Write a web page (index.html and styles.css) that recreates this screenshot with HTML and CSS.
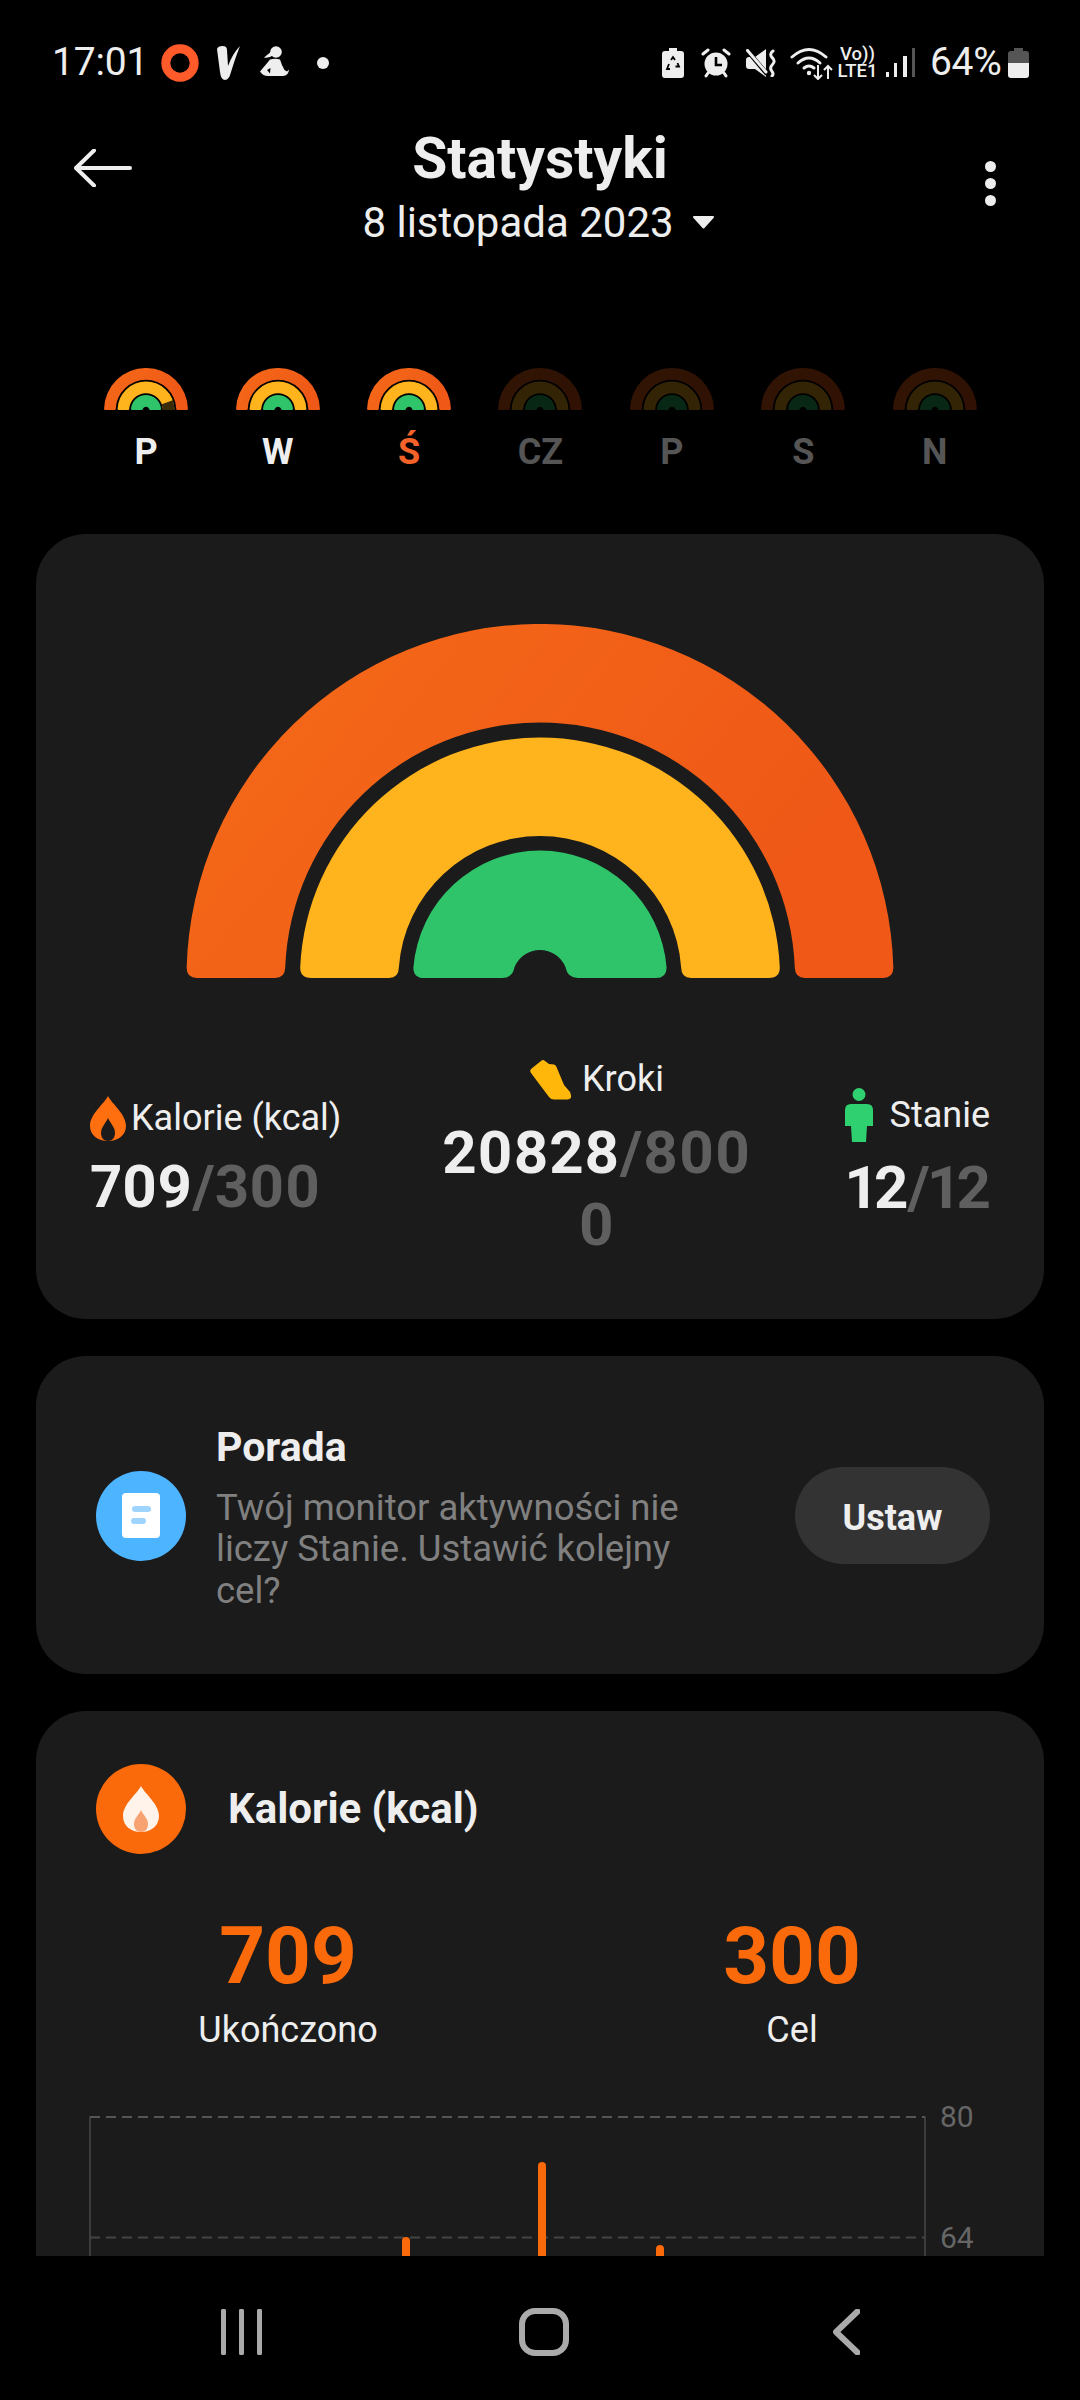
FILE: index.html
```html
<!DOCTYPE html>
<html lang="pl">
<head>
<meta charset="utf-8">
<title>Statystyki</title>
<link rel="stylesheet" href="styles.css">
</head>
<body>
<div class="screen">
  <header class="status">
    <span class="time">17:01</span>
    <svg class="si si-ring" viewBox="0 0 38 38"><circle cx="19" cy="19" r="14.2" fill="none" stroke="#ff5a2a" stroke-width="9"/></svg>
    <svg class="si si-v" viewBox="0 0 26 36"><path fill="#eee" d="M1 4Q2 1 6.500 1Q11 1 11 5L12 21Q17 8 24 1Q20 11 15 27Q13 35 9 35Q5 35 4 27Z"/></svg>
    <svg class="si si-pose" viewBox="0 0 32 34"><circle cx="17" cy="6" r="5.800" fill="#eee"/><path fill="#eee" d="M13 5L5 11.500Q10 12.500 14.500 9Z"/><path fill="#eee" fill-rule="evenodd" d="M11 13.500Q16 12 21 13.500Q23 20 25.500 24L28 25.500L30 23.500Q29.500 30 24 30L9 30Q4 30 1 25.500L9 16ZM8 24L11 27.500L11.500 22Z"/></svg>
    <span class="dot"></span>
    <span class="spring"></span>
    <svg class="si si-bat" viewBox="0 0 22 30"><path fill="#eee" d="M7 0H15V3H19Q22 3 22 6V27Q22 30 19 30H3Q0 30 0 27V6Q0 3 3 3H7Z"/><path fill="none" stroke="#000" stroke-width="1.800" d="M9 12L11 9L13 12M15.500 15L17 18.500H13.500M8 21H5L7 16"/></svg>
    <svg class="si si-alarm" viewBox="0 0 30 30"><circle cx="15" cy="16" r="11.500" fill="#eee"/><path fill="none" stroke="#eee" stroke-width="3" stroke-linecap="round" d="M2 6L7 2M28 6L23 2M5 28L7 25M25 28L23 25"/><path fill="none" stroke="#000" stroke-width="2.600" d="M15 9V17H21"/></svg>
    <svg class="si si-mute" viewBox="0 0 30 28"><path fill="#eee" d="M3 8H9L20 0V28L9 20H3Q0 20 0 17V11Q0 8 3 8Z"/><path stroke="#000" stroke-width="4.500" d="M0 0L21 25"/><path stroke="#eee" stroke-width="3" stroke-linecap="round" d="M1.500 1.500L20 23"/><path fill="none" stroke="#eee" stroke-width="3" stroke-linecap="round" d="M27 2Q23 5 26 8.500Q30 12 26.500 15.500Q23 19 26 22.500Q28 25 26 27"/></svg>
    <svg class="si si-wifi" viewBox="0 0 44 34"><g fill="none" stroke="#eee" stroke-width="3" stroke-linecap="round"><path d="M2 11Q19 -4 36 11"/><path d="M8 17Q19 7 30 17"/><path d="M14 22Q19 18 24 22"/></g><circle cx="19" cy="27" r="2.200" fill="#eee"/><path fill="none" stroke="#eee" stroke-width="2" d="M28 19V33M24 29L28 33L32 29M38 33V20M34 24L38 20L42 24"/></svg>
    <span class="net"><span class="net-vo">Vo))</span><span class="net-lte">LTE1</span></span>
    <span class="signal"><i class="sb sb1"></i><i class="sb sb2"></i><i class="sb sb3"></i><i class="sb sb4"></i></span>
    <span class="pct">64%</span>
    <svg class="si si-batt" viewBox="0 0 21 30"><path fill="#555" d="M6 0H15V3H18Q21 3 21 6V15H0V6Q0 3 3 3H6Z"/><path fill="#eee" d="M0 15H21V27Q21 30 18 30H3Q0 30 0 27Z"/></svg>
  </header>

  <div class="appbar">
    <svg class="back" viewBox="0 0 58 38"><path fill="none" stroke="#eee" stroke-width="4" stroke-linecap="round" stroke-linejoin="round" d="M20 1.500L2 19L20 36.500M2 19H56"/></svg>
    <div class="heading">
      <h1 class="title">Statystyki</h1>
      <div class="date"><span>8 listopada 2023</span><svg class="caret" viewBox="0 0 23 14"><path fill="#eee" stroke="#eee" stroke-width="2" stroke-linejoin="round" d="M2 2H21L11.500 12.500Z"/></svg></div>
    </div>
    <div class="more"><i></i><i></i><i></i></div>
  </div>

  <main class="scroll">
    <svg class="defs" width="0" height="0" aria-hidden="true">
      <defs>
        <linearGradient id="og" x1="0" y1="0" x2="1" y2="0.400"><stop offset="0" stop-color="#f56a18"/><stop offset="1" stop-color="#ef5817"/></linearGradient>
        <symbol id="rainbow" viewBox="0 0 708 354">
          <path fill="url(#og)" d="M.64 343.500A353.500 353.500 0 0 1 707.360 343.500Q707.500 354 697 354H619Q609 354 608.800 343.500A255 255 0 0 0 99.200 343.500Q99 354 89 354H11Q.5 354 .64 343.500Z"/>
          <path fill="#ffb31c" d="M114.210 343.500A240 240 0 0 1 593.790 343.500Q593.800 354 583 354H505Q495.300 354 495.150 343.500A141.500 141.500 0 0 0 212.850 343.500Q212.700 354 203 354H125Q114.200 354 114.210 343.500Z"/>
          <path fill="#2fc36a" d="M227.400 343.500A127 127 0 0 1 480.600 343.500Q480.700 354 470 354H392Q381.500 354 379.600 343.500A27.500 27.500 0 0 0 328.400 343.500Q326.500 354 316 354H238Q227.300 354 227.400 343.500Z"/>
        </symbol>
      </defs>
    </svg>

    <section class="week">
      <div class="day"><svg class="mini" viewBox="0 0 708 354"><use href="#rainbow"/><path fill="#3a2c08" d="M579.500 271.500A240 240 0 0 1 594 354H495A141.500 141.500 0 0 0 487 305Z"/></svg><span class="dl">P</span></div>
      <div class="day"><svg class="mini"><use href="#rainbow"/></svg><span class="dl">W</span></div>
      <div class="day"><svg class="mini"><use href="#rainbow"/></svg><span class="dl dl-now">Ś</span></div>
      <div class="day day-off"><svg class="mini"><use href="#rainbow"/></svg><span class="dl">CZ</span></div>
      <div class="day day-off"><svg class="mini"><use href="#rainbow"/></svg><span class="dl">P</span></div>
      <div class="day day-off"><svg class="mini"><use href="#rainbow"/></svg><span class="dl">S</span></div>
      <div class="day day-off"><svg class="mini"><use href="#rainbow"/></svg><span class="dl">N</span></div>
    </section>

    <section class="card card-ring">
      <svg class="big"><use href="#rainbow"/></svg>
      <div class="stats">
        <div class="stat stat-cal">
          <div class="stat-label">
            <svg class="ic-flame" viewBox="0 0 36 45"><path fill="#ff6f10" d="M18 0C22 8 36 18 36 30C36 39 28 45 18 45C8 45 0 39 0 30C0 18 14 8 18 0Z"/><path fill="#1b1b1b" d="M18 22C20 27 25 31 25 37C25 42 22 45 18 45C14 45 11 42 11 37C11 31 16 27 18 22Z"/></svg>
            <span>Kalorie (kcal)</span>
          </div>
          <div class="stat-num"><b>709</b><span class="of">/300</span></div>
        </div>
        <div class="stat stat-steps">
          <div class="stat-label">
            <svg class="ic-shoe" viewBox="6 5 43 42"><path fill="#ffb80a" d="M8 16L18 8Q20 6 22 8L26 11L31 11.500Q33 12 33.500 14L41 32L47 39Q50 46 45 46.500L31 46.500Q28 46.500 26 44L8 20Q6.500 18 8 16Z"/></svg>
            <span>Kroki</span>
          </div>
          <div class="stat-num stat-num-wrap"><b>20828</b><span class="of">/800</span><span class="of of-rest">0</span></div>
        </div>
        <div class="stat stat-stand">
          <div class="stat-label">
            <svg class="ic-person" viewBox="0 0 28 54"><circle cx="14" cy="6.500" r="6.500" fill="#2fd06f"/><path fill="#2fd06f" d="M6 16H22Q28 16 28 22V38H22L21 54H7L6 38H0V22Q0 16 6 16Z"/></svg>
            <span>Stanie</span>
          </div>
          <div class="stat-num"><b>12</b><span class="of">/12</span></div>
        </div>
      </div>
    </section>

    <section class="card card-tip">
      <div class="round round-blue">
        <svg class="ic-note" viewBox="0 0 38 45"><rect width="38" height="45" rx="4" fill="#fff"/><rect x="10" y="13" width="19" height="6" rx="3" fill="#9fd4ff"/><rect x="9" y="25" width="15" height="6" rx="3" fill="#9fd4ff"/></svg>
      </div>
      <div class="tip-text">
        <div class="tip-title">Porada</div>
        <p class="tip-desc">Twój monitor aktywności nie liczy Stanie. Ustawić kolejny cel?</p>
      </div>
      <button class="btn">Ustaw</button>
    </section>

    <section class="card card-cal">
      <div class="cal-head">
        <div class="round round-orange">
          <svg class="ic-flame2" viewBox="0 0 36 46"><path fill="#fff3ea" d="M18 0C22 8 36 18 36 30C36 40 28 46 18 46C8 46 0 40 0 30C0 18 14 8 18 0Z"/><path fill="#f7a270" d="M18 24C20 29 25 32 25 38C25 43 22 46 18 46C14 46 11 43 11 38C11 32 16 29 18 24Z"/></svg>
        </div>
        <h2 class="cal-title">Kalorie (kcal)</h2>
      </div>
      <div class="cal-nums">
        <div class="cal-col"><div class="cal-val">709</div><div class="cal-cap">Ukończono</div></div>
        <div class="cal-col"><div class="cal-val">300</div><div class="cal-cap">Cel</div></div>
      </div>
      <svg class="chart" viewBox="0 -20 1008 420">
        <path class="axis" d="M54 .5V400M889 .5V400"/>
        <path class="grid grid-top" d="M54 1H889"/>
        <path class="grid" d="M54 121.500H889"/>
        <path class="grid" d="M54 242H889"/>
        <text class="tick" x="904" y="11">80</text>
        <text class="tick" x="904" y="132">64</text>
        <path class="bar" d="M370 400V125"/>
        <path class="bar" d="M506 400V50"/>
        <path class="bar" d="M624 400V133"/>
      </svg>
    </section>
  </main>

  <nav class="nav">
    <svg class="nv nv-recent" viewBox="0 0 42 46"><path d="M2.500 2V44M20.500 2V44M38.500 2V44"/></svg>
    <svg class="nv nv-home" viewBox="0 0 50 48"><rect x="3" y="3" width="44" height="42" rx="13"/></svg>
    <svg class="nv nv-back" viewBox="0 0 27 46"><path d="M24.500 2.500L3 23L24.500 43.500"/></svg>
  </nav>
</div>
</body>
</html>
```

FILE: styles.css
```css
* { box-sizing: border-box; }
html, body { margin: 0; padding: 0; background: #000; }
body { font-family: Roboto, "Noto Sans", sans-serif; color: #eee; }
h1, h2, p { margin: 0; font: inherit; }
.screen { width: 1080px; height: 2400px; display: flex; flex-direction: column; overflow: hidden; background: #000; }

/* status bar */
.status { height: 86px; padding: 39px 51px 0 52px; display: flex; align-items: center; flex: none; }
.time { font-size: 39px; line-height: 47px; width: 90px; letter-spacing: -.2px; }
.pct { font-size: 39px; line-height: 47px; width: 70px; margin-left: 15px; letter-spacing: -.3px; white-space: nowrap; }
.si { display: block; flex: none; }
.si-ring { width: 38px; height: 38px; margin-left: 19px; }
.si-v { width: 26px; height: 36px; margin-left: 17px; }
.si-pose { width: 32px; height: 34px; margin-left: 17px; }
.dot { width: 12px; height: 12px; border-radius: 50%; background: #eee; margin-left: 26px; flex: none; }
.spring { flex: 1; }
.si-bat { width: 22px; height: 30px; }
.si-alarm { width: 30px; height: 30px; margin-left: 17px; }
.si-mute { width: 30px; height: 28px; margin-left: 15px; }
.si-wifi { width: 44px; height: 34px; margin-left: 14px; }
.net { display: flex; flex-direction: column; align-items: center; width: 38px; margin-left: 5px; font-size: 18.500px; line-height: 17px; font-weight: 500; }
.signal { display: flex; align-items: flex-end; gap: 5.500px; height: 29px; margin-left: 9px; flex: none; }
.sb { display: block; width: 3px; background: #eee; }
.sb1 { height: 5px; }
.sb2 { height: 14px; }
.sb3 { height: 21px; width: 4px; }
.sb4 { height: 29px; background: #555; }
.si-batt { width: 21px; height: 30px; margin-left: 8px; }

/* app bar */
.appbar { flex: none; display: grid; grid-template-columns: 280px 1fr 280px; padding-top: 41px; height: 162px; }
.back { width: 58px; height: 38px; margin: 22px 0 0 74px; display: block; }
.heading { text-align: center; }
.title { font-size: 57px; line-height: 64px; font-weight: 700; }
.date { margin-top: 7px; display: flex; justify-content: center; align-items: center; gap: 18px; padding-right: 3px; font-size: 42px; line-height: 50px; white-space: nowrap; }
.caret { width: 23px; height: 14px; display: block; margin-top: -2px; }
.more { display: flex; flex-direction: column; gap: 6px; align-items: center; justify-self: end; margin: 34px 84px 0 0; width: 12px; }
.more i { display: block; width: 11px; height: 11px; border-radius: 50%; background: #eee; }

/* main */
.scroll { flex: 1; min-height: 0; overflow: hidden; }
.defs { position: absolute; }
.week { display: grid; grid-template-columns: repeat(7, 131.430px); padding: 120px 0 0 80.500px; margin-bottom: 62px; }
.day { display: flex; flex-direction: column; align-items: center; }
.mini { width: 84px; height: 42px; display: block; }
.day-off .mini { opacity: .2; }
.dl { margin-top: 22px; font-size: 36px; line-height: 40px; font-weight: 700; color: #eee; }
.dl-now { color: #f4622a; }
.day-off .dl { color: #555; }

.card { background: #1b1b1b; border-radius: 50px; margin: 0 36px 37px; }
.card-ring { height: 785px; padding-top: 90px; }
.big { display: block; width: 708px; height: 354px; margin: 0 auto; }
.stats { margin-top: 79px; padding: 0 54px; display: flex; justify-content: space-between; align-items: center; }
.stat { display: flex; flex-direction: column; }
.stat-cal { width: 252px; }
.stat-steps { width: 312px; align-items: center; margin-left: 6px; }
.stat-stand { width: 145px; align-items: flex-end; margin-bottom: 6px; }
.stat-label { display: flex; align-items: center; font-size: 36px; line-height: 44px; white-space: nowrap; }
.stat-num { font-size: 60px; line-height: 72px; font-weight: 700; font-variant-numeric: proportional-nums; }
.stat-num b { font-weight: 700; color: #eee; }
.of { color: #5f5f5f; }
.of-rest { display: block; }
.stat-num-wrap { width: 100%; text-align: center; letter-spacing: .4px; white-space: nowrap; }
.stat-cal .stat-num { margin-top: 10px; }
.stat-steps .stat-num { margin-top: 16px; }
.stat-stand .stat-num { margin-top: 10px; letter-spacing: -1px; }
.ic-flame { width: 36px; height: 45px; margin-right: 5px; display: block; }
.ic-shoe { width: 43px; height: 42px; margin-right: 10px; display: block; }
.ic-person { width: 28px; height: 54px; margin-right: 17px; display: block; }

.card-tip { height: 318px; padding: 0 54px 0 60px; display: flex; align-items: center; }
.round { width: 90px; height: 90px; border-radius: 50%; display: flex; align-items: center; justify-content: center; flex: none; }
.round-blue { background: #4db4ff; margin-top: 1px; }
.round-orange { background: #fa6a0a; }
.ic-note { width: 38px; height: 45px; display: block; }
.ic-flame2 { width: 36px; height: 46px; display: block; }
.tip-text { width: 490px; margin: 3.500px 0 0 30px; flex: none; }
.tip-title { font-size: 41px; line-height: 48px; font-weight: 700; }
.tip-desc { margin-top: 16px; font-size: 36.500px; line-height: 41.500px; color: #808080; }
.btn { margin-left: auto; width: 195px; height: 97px; padding: 5px 0 0; border: 0; border-radius: 49px; background: #333; color: #eee; font-family: inherit; font-size: 36px; font-weight: 700; flex: none; }

.card-cal { margin-bottom: 0; padding-top: 53px; height: 800px; }
.cal-head { display: flex; align-items: center; padding-left: 60px; gap: 42px; }
.cal-title { font-size: 42px; line-height: 48px; font-weight: 700; }
.cal-nums { display: grid; grid-template-columns: 1fr 1fr; margin-top: 54px; text-align: center; }
.cal-val { font-size: 80px; line-height: 96px; font-weight: 700; color: #fa6a0a; }
.cal-cap { margin-top: 5px; font-size: 36px; line-height: 42px; }
.chart { display: block; width: 1008px; height: 420px; margin-top: 45px; }
.axis { stroke: #3c3c3c; stroke-width: 2; fill: none; }
.grid { stroke: #444; stroke-width: 2; stroke-dasharray: 10 6; fill: none; }
.grid-top { stroke: #555; }
.tick { font-family: Roboto, sans-serif; font-size: 30px; fill: #666; }
.bar { stroke: #fa6a0a; stroke-width: 8; stroke-linecap: round; fill: none; }

/* nav */
.nav { flex: none; height: 144px; background: #000; position: relative; }
.nv { position: absolute; top: 53px; display: block; fill: none; stroke: #aaa; stroke-linecap: round; stroke-linejoin: round; }
.nv-recent { left: 221px; width: 42px; height: 46px; stroke-width: 5; }
.nv-home { left: 519px; top: 52px; width: 50px; height: 48px; stroke-width: 6; }
.nv-back { left: 833px; width: 27px; height: 46px; stroke-width: 6; }
```
